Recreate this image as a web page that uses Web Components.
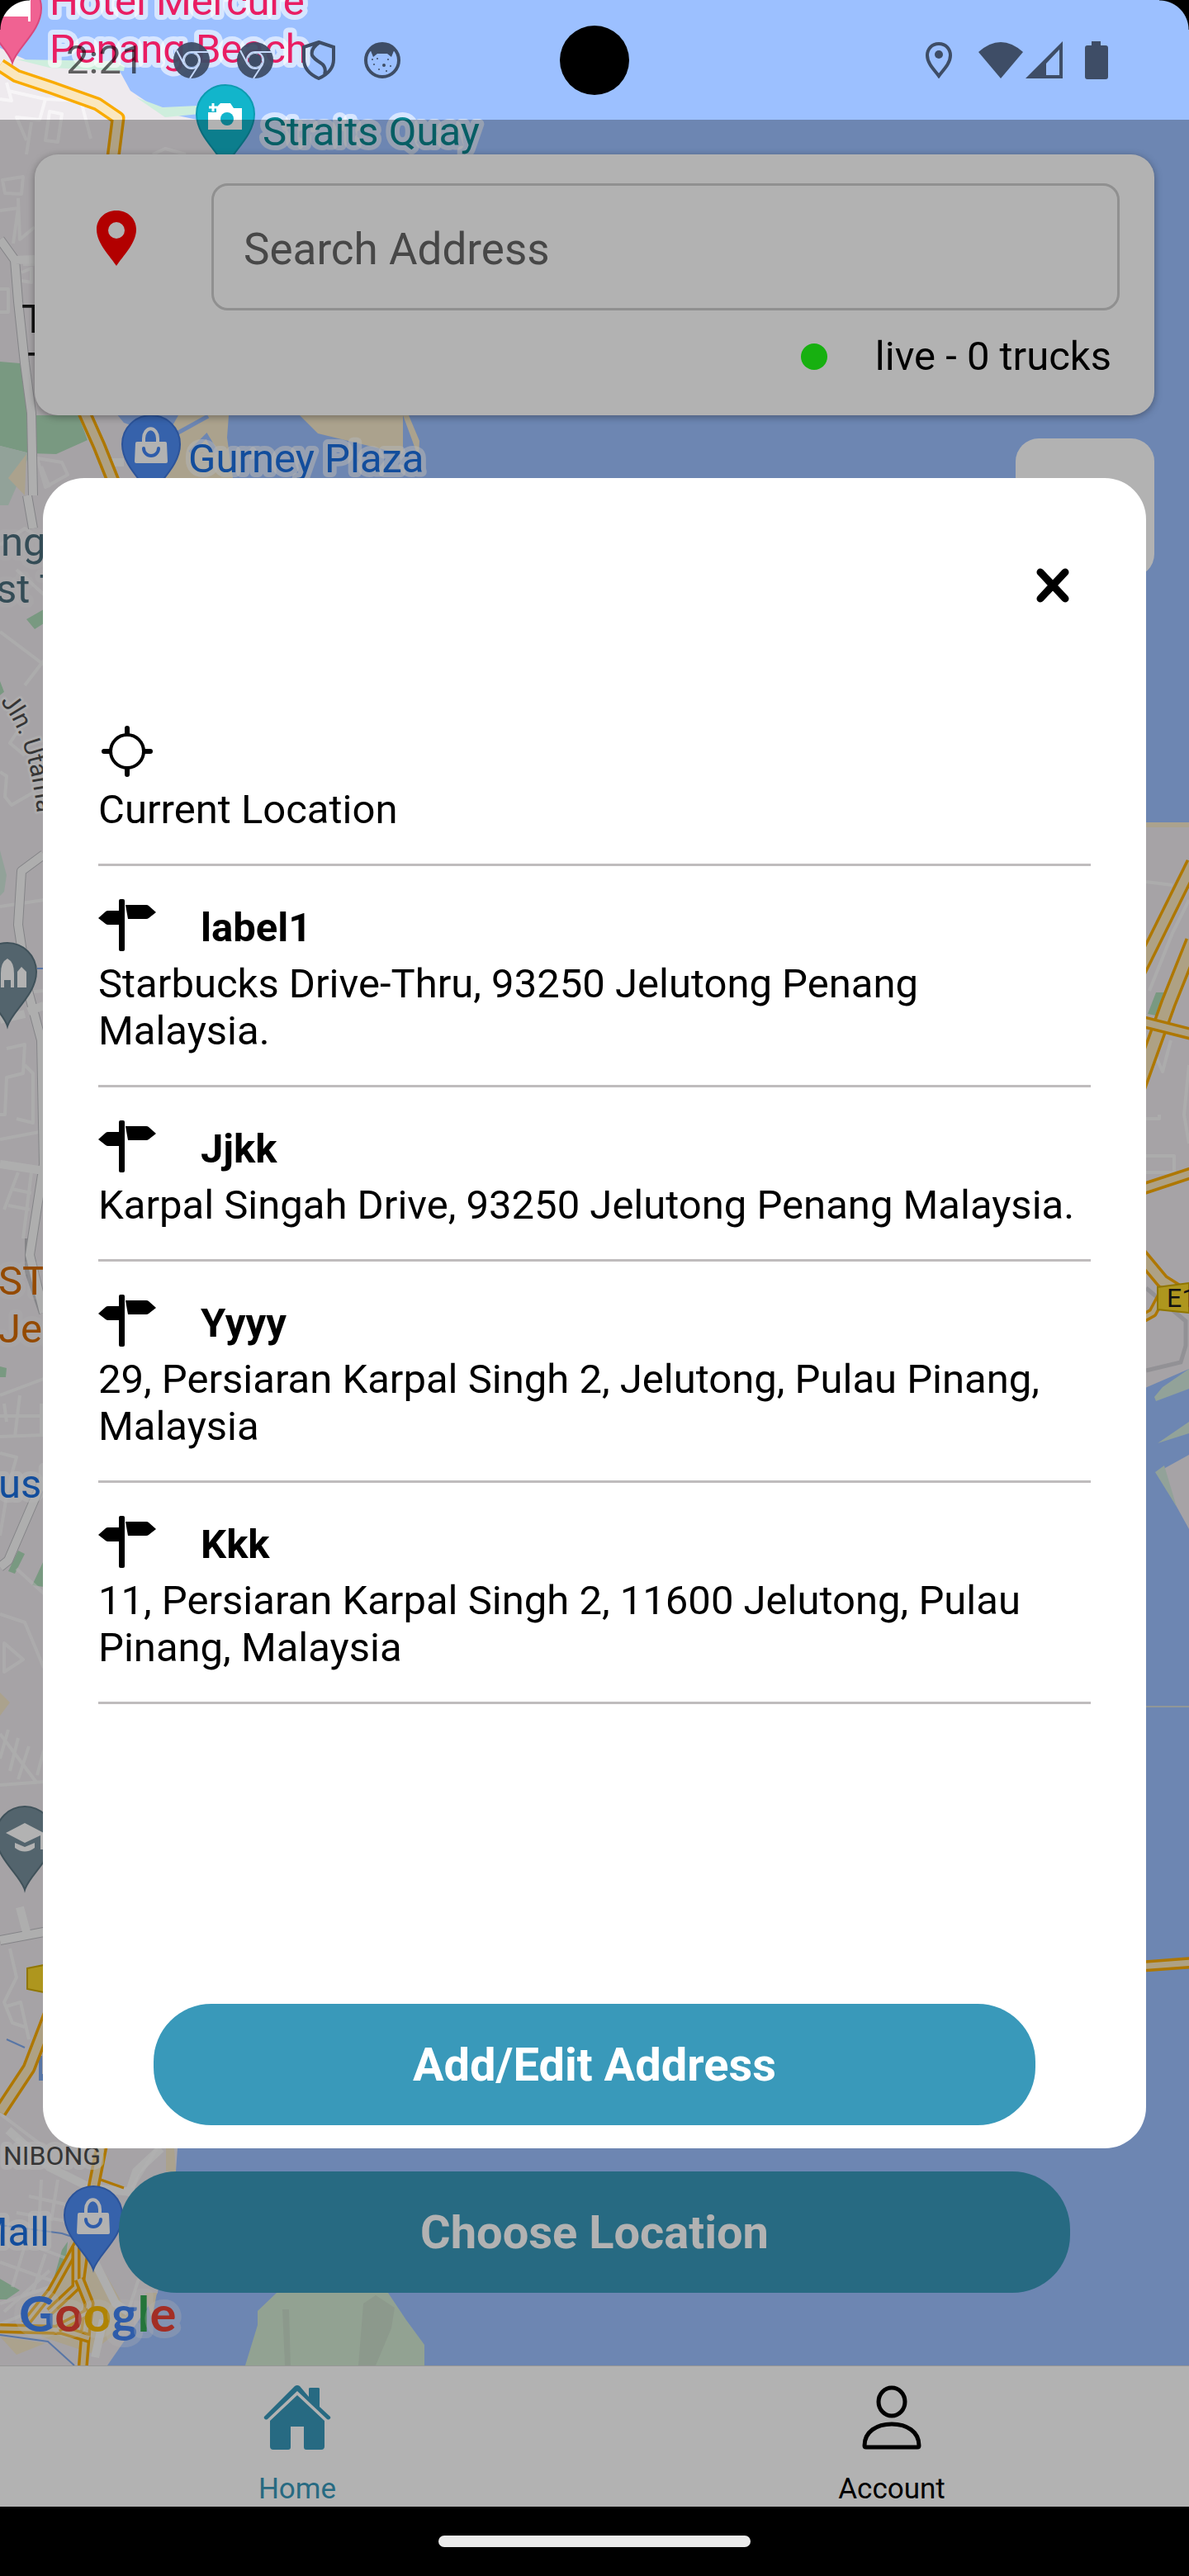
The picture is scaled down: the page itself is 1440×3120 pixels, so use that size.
<!DOCTYPE html>
<html lang="en">
<head>
<meta charset="utf-8">
<meta name="viewport" content="width=device-width, initial-scale=1">
<title>Choose Location</title>
<style>
  html, body { margin: 0; height: 100%; background: #000; }
  body { font-family: Roboto, "Noto Sans", sans-serif; }
</style>
</head>
<body>
<truck-app></truck-app>

<script>
// teardrop marker with its head centred on 0,0
const PIN = 'M0,66 C-5,48 -35,28 -35,0 A35,35 0 1 1 35,0 C35,28 5,48 0,66 Z';

const BAG = `
  <path d="M-17,-3 H17 Q19,-3 19,-1 L20,21 Q20,23 18,23 H-18 Q-20,23 -20,21 L-19,-1 Q-19,-3 -17,-3 Z" fill="#fff"/>
  <path d="M-9,-2 V-7 A8,11 0 0 1 8,-7 V-2" fill="none" stroke="#fff" stroke-width="4"/>
  <path d="M-9,5 A9,9 0 0 0 9,5" fill="none" stroke="#4285f4" stroke-width="4" stroke-linecap="round"/>`;

class StreetMap extends HTMLElement {
  constructor() {
    super();
    this.attachShadow({ mode: 'open' });
    this.render();
  }

  road(points, width = 17) {
    return `
      <polyline points="${points}" stroke="#f9ab00" stroke-width="${width}"/>
      <polyline points="${points}" stroke="#fae7be" stroke-width="${width - 7}"/>`;
  }

  pin(x, y, fill, edge, glyph) {
    return `<g transform="translate(${x} ${y})">
      <path d="${PIN}" fill="${fill}" stroke="${edge}" stroke-width="2"/>${glyph}</g>`;
  }

  render() {
    this.shadowRoot.innerHTML = `
    <style>
      :host { display: block; background: #9cc0ff; overflow: hidden; }
      svg { display: block; width: 100%; height: 100%; font-family: Roboto, "Noto Sans", sans-serif; }
      .lanes { fill: none; stroke: #fff; stroke-width: 4; stroke-linejoin: round; opacity: .55; }
      .streets { fill: none; stroke: #fafafa; stroke-width: 10; stroke-linejoin: round; }
      .edge { fill: none; stroke: #bdbdc2; stroke-width: 12; stroke-linejoin: round; }
      .roads { fill: none; stroke-linejoin: round; }
      text { font-size: 49px; stroke: #fff; stroke-opacity: .6; stroke-width: 12px; stroke-linejoin: round; paint-order: stroke; }
      .pink { fill: #e91e63; }
      .teal { fill: #0a8790; }
      .blue { fill: #1a6fe0; }
      .slate { fill: #4b6e7c; stroke-opacity: .2; }
      .orange { fill: #d56a00; stroke-opacity: .2; }
      .dark { fill: #1b1b1b; stroke: none; }
      .area { font-size: 32px; fill: #4c4c4c; }
      .street { font-size: 30px; fill: #4c4c4c; stroke-width: 6px; }
      .logo { font-family: Lato, Roboto, sans-serif; font-size: 60px; font-weight: 700; stroke-width: 16px; stroke-opacity: .3; }
    </style>
    <svg viewBox="0 0 1440 2865" preserveAspectRatio="xMinYMin slice" role="img" aria-label="Map of Penang">
      <path fill="#eeeaee" d="M0,58 L35,74 L140,77 L158,110 L197,136 L262,150 L262,400 L140,500 L150,512 L200,530 L215,2602 L213,2630 L191,2777 L130,2865 H0 Z"/>
      <path fill="#ceeedd" d="M20,72 L140,74 L151,80 L150,86 L60,82 Z M165,118 L197,130 L240,128 L242,138 L200,142 Z"/>
      <g fill="#aedbb9">
        <path d="M0,438 L24,440 L40,480 L42,503 L95,503 L106,533 L68,550 L36,549 L0,540 Z"/>
        <path d="M32,750 L53,738 L53,755 L42,762 Z M0,825 L5,838 L0,842 Z"/>
        <path d="M0,1655 L8,1657 L7,1668 L0,1668 Z M10,1903 L22,1878 L30,1882 L18,1906 Z M39,1920 L53,1890 V1922 Z"/>
        <path d="M0,2760 L24,2774 L8,2785 L0,2785 Z M75,2725 L82,2715 L78,2755 L65,2760 Z"/>
      </g>
      <path fill="#d2e8dc" d="M0,540 L36,549 L24,580 L10,612 L0,612 Z M0,1030 L8,1060 L5,1080 L0,1085 Z"/>
      <g fill="#f5e8ca">
        <path d="M195,540 L216,503 H277 L275,530 L282,579 H190 Z M363,503 H488 V550 L430,536 L385,525 Z M488,503 L495,503 L508,534 L507,555 L498,530 Z"/>
        <path d="M32,550 L10,579 L30,600 Z M0,2050 L12,2062 L0,2078 Z M201,2602 H211 L213,2630 H201 Z M190,2777 L184,2810 L176,2777 Z M0,2830 L55,2838 L20,2852 Z"/>
        <path d="M88,2705 L108,2720 L160,2810 L110,2850 L50,2830 Z"/>
      </g>
      <path fill="none" stroke="#9cc0ff" stroke-width="5" d="M205,530 L252,504 M230,548 L250,528 L262,548"/>

      <g class="lanes">
        <path d="M0,120 L14,122 L8,100 M10,110 L55,120 L48,145 L20,142 L32,170 M55,120 L98,122 L110,168 M60,135 L75,138 L70,172 L55,170 Z M32,187 L38,148 M185,187 L200,180 L225,187"/>
        <path d="M3,218 L28,214 L26,235 L6,234 Z M0,255 L22,252 L16,295 M22,240 L24,290 L42,275 M28,320 H42 M0,350 H10 V378 H0 M26,330 L38,325 V342 L26,340"/>
        <path d="M45,555 L75,560 L82,575 L55,590 Z M50,565 L60,590"/>
        <path d="M0,660 L30,640 L53,655 M20,690 L53,720 M0,765 L53,805 M30,830 L53,800 M10,850 L25,880 L12,900 L30,915 M0,935 L8,940 L6,965 L14,975 L40,960 L53,968"/>
        <path d="M0,1098 L53,1090 M0,1205 L53,1200 M8,1270 L30,1265 L28,1300 L8,1305 L6,1350 H0 M30,1290 L40,1300 V1360 L20,1355 M0,1380 L53,1370 M22,1420 L5,1465 M14,1440 L38,1445 M10,1460 L36,1465 M38,1420 L28,1500"/>
        <path d="M0,1690 L53,1670 M0,1715 H53 M5,1700 L8,1722 M24,1690 L18,1740 M0,1740 L53,1738 M0,1760 L20,1765 L10,1800 M50,1700 V1740 M0,1860 L10,1800"/>
        <path d="M20,1900 L53,1930 M0,1955 L30,1965 L53,2020 M5,1990 L28,2010 L5,2025 Z M0,2100 L45,2160 M10,2095 L0,2130 M22,2105 L12,2145 M35,2115 L22,2155 M53,2120 L45,2150 M0,2162 L53,2158"/>
        <path d="M12,2360 L20,2395 L5,2425 L15,2450 L30,2455 M8,2430 L25,2425 L35,2470 M0,2560 L53,2600"/>
        <path d="M20,2680 L80,2690 M50,2640 L48,2680 M70,2640 L62,2690 M35,2660 L80,2670 M0,2705 L80,2735 M0,2740 L70,2765 M30,2720 L15,2770 M55,2730 L40,2775 M0,2790 L60,2770 M5,2800 L60,2750 M0,2815 L50,2795"/>
      </g>
      <path class="edge" d="M0,290 L18,315 L22,365 L30,440 L38,500 L40,600 M33,600 L40,640 M53,1035 L26,1055 L22,1120 L34,1200 L50,1260 L53,1410 L36,1520 L53,1590 M53,1790 L10,1890 L0,1898 M0,2350 L53,2340 M53,1590 L36,1540 L36,1500"/>
      <path class="streets" d="M0,290 L18,315 L22,365 L30,440 L38,500 L40,600 M18,315 L42,314 M33,600 L40,640 M120,560 L150,560 M53,1035 L26,1055 L22,1120 L34,1200 L50,1260 L53,1410 L36,1520 L53,1590 M0,1410 L53,1418 M0,1235 L30,1228 M34,1225 L53,1218 M53,1790 L10,1890 L0,1898 M0,2350 L53,2340 M24,2310 L32,2340"/>
      <path class="streets" d="M10,2580 L60,2625 L110,2650 L160,2655 M195,2602 L165,2630 L155,2660 M115,2740 L140,2790 L155,2800 M125,2810 L115,2855"/>
      <path class="lanes" d="M190,2602 L160,2650 M70,2625 L20,2590 M168,2760 L155,2800" opacity=".8"/>
      <path fill="none" stroke="#7fa9ee" stroke-width="2" d="M0,2695 L75,2705 L90,2710 M0,2828 L58,2836 L90,2865 M45,1173 H53 M8,2470 L30,2480"/>
      <path d="M47,2490 H51 V2512 H53 V2520 H47 Z" fill="#7fa9ee"/>

      <g class="roads">
        ${this.road('0,79 20,92 62,106 118,126 143,143 137,190')}
        ${this.road('100,495 120,540 138,585')}
        ${this.road('0,2558 35,2505 60,2440')}
        ${this.road('124,2595 114,2645 104,2700 96,2760', 15)}
        ${this.road('104,2700 62,2775 30,2815', 11)}
        ${this.road('92,2720 92,2770 60,2800', 11)}
        ${this.road('96,2760 108,2790 104,2820 100,2870', 13)}
        ${this.road('0,2820 75,2822 108,2832', 12)}
        ${this.road('108,2800 70,2820', 11)}
      </g>
      <polyline points="122,2640 150,2650" fill="none" stroke="#f9ab00" stroke-width="3"/>
      <path d="M33,2384 L53,2380 V2413 L33,2409 Z" fill="#f9d72c" stroke="#cfa900" stroke-width="2"/>

      <!-- east shore -->
      <path fill="#eeeaee" d="M1380,998 H1440 V1658 L1380,1684 Z M1402,1783 L1440,1762 V1852 Z"/>
      <path fill="#d2e8dc" d="M1398,1692 L1408,1680 L1440,1658 V1682 L1400,1697 Z M1402,1748 L1440,1722 V1736 Z M1399,1783 L1410,1775 L1425,1825 Z"/>
      <path fill="#f5e8ca" d="M1380,996 H1440 V1002 H1380 Z"/>
      <path fill="#aedbb9" d="M1390,1228 L1400,1202 H1412 L1400,1230 Z"/>
      <g class="lanes">
        <path d="M1388,1068 L1420,1072 M1392,1200 L1420,1130 L1440,1090 M1440,1290 L1434,1350 L1440,1385 M1388,1355 H1404 V1350 M1388,1400 L1422,1400 V1420 H1388 M1400,1280 L1408,1298 L1418,1260"/>
      </g>
      <path fill="none" stroke="#d2d0d6" stroke-width="5" d="M1388,1560 L1436,1600 V1630 L1430,1650 L1388,1660"/>
      <g class="roads">
        ${this.road('1378,1180 1445,1045', 18)}
        ${this.road('1378,1318 1415,1215 1445,1140', 20)}
        ${this.road('1378,1236 1445,1253', 15)}
        ${this.road('1378,1442 1445,1420', 15)}
        ${this.road('1378,1516 1408,1552 1440,1572', 18)}
        ${this.road('1378,1600 1396,1590 1412,1560', 12)}
        ${this.road('1378,2382 1445,2377', 14)}
      </g>
      <path fill="none" stroke="#d0d8da" stroke-width="2" d="M1380,2067 H1440"/>
      <path d="M1402,1559 L1440,1554 V1590 L1402,1586 Z" fill="#f9d72c" stroke="#cfa900" stroke-width="2"/>
      <text class="dark" x="1413" y="1583" style="font-size: 32px">E1</text>

      <!-- southern islet -->
      <path fill="#d2e8d2" d="M335,2777 L312,2799 V2816 L297,2865 H514 V2840 L492,2810 L470,2777 L450,2740 H360 Z"/>
      <path fill="#c9dcc9" d="M342,2797 H350 L352,2865 H345 Z M440,2790 L455,2780 L478,2795 L474,2820 L455,2865 H434 Z"/>

      ${this.pin(15, 10, '#f06292', '#d9487c', '<path d="M-12,-10 H22 V16 H19 V10 H-12 Z" fill="#fff"/>')}
      ${this.pin(273, 138, '#12b5cb', '#0e9bb0', `
        <path d="M-6,-13 H6 L10,-7 H20 V19 H-21 V-2 H-11 V-8 Z" fill="#fff"/>
        <circle cx="2" cy="6" r="8" fill="#12b5cb"/>
        <path d="M-15,-13 V-3 M-20,-8 H-10" stroke="#fff" stroke-width="3"/>`)}
      ${this.pin(183, 538, '#4e8df5', '#3f78dc', BAG)}
      ${this.pin(113, 2683, '#4e8df5', '#3f78dc', BAG)}
      ${this.pin(9, 1177, '#78909c', '#5b7581', `
        <path d="M-8,19 V2 Q-8,-12 0,-16 Q8,-12 8,2 V19 H4 V10 H-4 V19 Z M12,19 V0 L17,-6 L23,0 V19 Z" fill="#fff"/>`)}
      ${this.pin(30, 2223, '#78909c', '#5b7581', `
        <path d="M-23,-3 L0,-15 L23,-3 V17 H19 V0 L0,9 Z M-12,9 L0,14 L12,9 V15 Q0,24 -12,15 Z" fill="#fff"/>`)}

      <text class="pink" x="60" y="18">Hotel Mercure</text>
      <text class="pink" x="60" y="76">Penang Beach</text>
      <text class="teal" x="318" y="176">Straits Quay</text>
      <text class="blue" x="228" y="572">Gurney Plaza</text>
      <text class="dark" x="26" y="403">T</text>
      <text class="dark" x="33" y="461">T</text>
      <text class="slate" x="1" y="673">ng</text>
      <text class="slate" x="-5" y="730">st T</text>
      <path id="utama" d="M0,850 Q32,885 44,975 L46,1000" fill="none"/>
      <text class="street"><textPath href="#utama">Jln. Utama</textPath></text>
      <text class="orange" x="-2" y="1568">ST</text>
      <text class="orange" x="-2" y="1626">Jel</text>
      <text class="blue" x="-2" y="1814">us'</text>
      <text class="area" x="4" y="2622">NIBONG</text>
      <text class="blue" x="60" y="2720" text-anchor="end">Mall</text>
      <text class="logo" x="23" y="2824"><tspan fill="#4285f4">G</tspan><tspan fill="#ea4335">o</tspan><tspan fill="#fbbc04">o</tspan><tspan fill="#4285f4">g</tspan><tspan fill="#34a853">l</tspan><tspan fill="#ea4335">e</tspan></text>
    </svg>`;
  }
}

class StatusBar extends HTMLElement {
  constructor() {
    super();
    this.attachShadow({ mode: 'open' });
    this.render();
  }

  render() {
    const chrome = `
      <svg width="44" height="44" viewBox="0 0 44 44">
        <path fill-rule="evenodd" d="M22,0 A22,22 0 1 1 22,44 A22,22 0 1 1 22,0 Z M22,13 A9,9 0 1 0 22,31 A9,9 0 1 0 22,13 Z" opacity=".95"/>
        <g stroke="#c4d8fa" stroke-width="2" fill="none"><circle cx="22" cy="22" r="10"/><path d="M22,12 H42 M13,27 L4,10 M31,27 L20,44"/></g>
        <circle cx="22" cy="22" r="8"/>
      </svg>`;

    this.shadowRoot.innerHTML = `
    <style>
      :host {
        display: grid;
        grid-template-columns: 1fr auto 1fr;
        align-items: center;
        height: 145px;
        padding: 0 80px;
        box-sizing: border-box;
        color: rgba(0,0,0,.6);
        position: relative;
      }
      .left, .right { display: flex; align-items: center; }
      .left { gap: 33px; }
      .time { font-size: 49px; line-height: 57px; width: 97px; }
      .right { justify-content: flex-end; padding-right: 18px; }
      .wifi { margin-left: 29px; }
      .signal { margin-left: 3px; }
      .battery { margin-left: 26px; }
      .camera { width: 84px; height: 84px; border-radius: 50%; background: #000; }
      svg { display: block; fill: #3e4d66; }
      .corner { position: absolute; top: 0; width: 36px; height: 36px; }
      .corner.l { left: 0; background: radial-gradient(circle at 100% 100%, transparent 35px, #000 36px); }
      .corner.r { right: 0; background: radial-gradient(circle at 0 100%, transparent 35px, #000 36px); }
    </style>
    <div class="left">
      <span class="time">2:21</span>
      ${chrome}
      ${chrome}
      <svg width="44" height="48" viewBox="0 0 44 48">
        <path d="M22,2 L40,8 V23 Q40,38 22,46 Q4,38 4,23 V8 Z M22,3 Q12,10 14,18 Q16,22 24,27 Q32,32 29,41" fill="none" stroke="#3e4d66" stroke-width="4"/>
      </svg>
      <svg width="44" height="44" viewBox="0 0 44 44">
        <circle cx="22" cy="22" r="20" fill="none" stroke="#3e4d66" stroke-width="4"/>
        <path d="M7,8 Q22,-3 37,8 L33,18 L28,14 H16 L11,18 Z"/>
        <g><circle cx="16" cy="20" r="1"/><circle cx="29" cy="21" r="1"/><circle cx="12" cy="27" r="1"/><circle cx="24" cy="28" r="2"/><circle cx="32" cy="29" r="1"/><circle cx="18" cy="33" r="1"/><circle cx="27" cy="35" r="1"/><circle cx="10" cy="21" r="1"/></g>
      </svg>
    </div>
    <div class="camera"></div>
    <div class="right">
      <svg width="38" height="44" viewBox="0 0 38 44">
        <path d="M19,2 C10,2 5,9 5,16 C5,26 14,34 19,41 C24,34 33,26 33,16 C33,9 28,2 19,2 Z" fill="none" stroke="#3e4d66" stroke-width="4"/>
        <circle cx="19" cy="15" r="5"/>
      </svg>
      <svg class="wifi" width="54" height="44" viewBox="0 0 54 44"><path d="M0,12 Q27,-12 54,12 L27,44 Z"/></svg>
      <svg class="signal" width="46" height="46" viewBox="0 0 46 46"><path fill-rule="evenodd" d="M45,0 V45 H0 Z M41,10 V41 H25 V27 Z"/></svg>
      <svg class="battery" width="28" height="46" viewBox="0 0 28 46"><path d="M8,0 H19 V5 H25 Q28,5 28,8 V43 Q28,46 25,46 H3 Q0,46 0,43 V8 Q0,5 3,5 H8 Z"/></svg>
    </div>
    <div class="corner l"></div>
    <div class="corner r"></div>`;
  }
}

class SearchCard extends HTMLElement {
  constructor() {
    super();
    this.attachShadow({ mode: 'open' });
    this.render();
  }

  render() {
    this.shadowRoot.innerHTML = `
    <style>
      :host {
        display: block;
        margin: 42px 42px 0;
        padding: 35px 42px 43px 56px;
        background: #fff;
        border-radius: 28px;
        box-shadow: 0 2px 10px rgba(0,0,0,.35);
      }
      .row { display: flex; align-items: center; }
      label { padding: 0 72px 20px 0; }
      svg { display: block; fill: #f00; }
      input {
        flex: 1;
        min-width: 0;
        height: 154px;
        padding: 6px 36px 0;
        box-sizing: border-box;
        border: 3px solid #cecece;
        border-radius: 20px;
        background: transparent;
        font: 53px Roboto, "Noto Sans", sans-serif;
      }
      input::placeholder { color: #666; opacity: 1; }
      .live {
        display: flex;
        justify-content: flex-end;
        align-items: center;
        gap: 58px;
        margin-top: 27px;
        padding-right: 10px;
        font-size: 49px;
        line-height: 57px;
      }
      .dot { width: 32px; height: 32px; border-radius: 50%; background: #21fd18; }
    </style>
    <div class="row">
      <label for="search">
        <svg width="86" height="68" viewBox="0 0 86 68" aria-label="Location">
          <path fill-rule="evenodd" d="M43,0 C29,0 19,10 19,23 C19,40 36,56 43,67 C50,56 67,40 67,23 C67,10 57,0 43,0 Z M43,14 A10,10 0 1 1 43,34 A10,10 0 1 1 43,14 Z"/>
        </svg>
      </label>
      <input id="search" type="text" placeholder="Search Address">
    </div>
    <div class="live"><span class="dot"></span><span><slot></slot></span></div>`;
  }
}

class PillButton extends HTMLElement {
  constructor() {
    super();
    this.attachShadow({ mode: 'open' });
    this.render();
  }

  render() {
    this.shadowRoot.innerHTML = `
    <style>
      :host { display: block; width: 80%; margin: 0 auto; }
      button {
        display: block;
        width: 100%;
        height: 147px;
        padding: 0;
        border: 0;
        border-radius: 70px;
        background: #3999ba;
        color: #fff;
        font: 700 56px/66px Roboto, "Noto Sans", sans-serif;
        cursor: pointer;
      }
    </style>
    <button type="button"><slot></slot></button>`;
  }
}

class AddressItem extends HTMLElement {
  constructor() {
    super();
    this.attachShadow({ mode: 'open' });
    this.render();
  }

  get icon() {
    if (this.hasAttribute('current')) {
      return `<svg width="70" height="70" viewBox="0 0 70 70">
        <g fill="none" stroke="#000" stroke-linecap="round">
          <circle cx="35" cy="35" r="20" stroke-width="4"/>
          <path d="M35,7 V14 M35,56 V63 M7,35 H14 M56,35 H63" stroke-width="6"/>
        </g></svg>`;
    }
    return `<svg width="70" height="70" viewBox="0 0 70 70">
      <rect x="25" y="3" width="7" height="63" rx="2"/>
      <path d="M25,17 H12 Q10,17 9,18 L0,26 L9,33 Q10,34 12,34 H25 Z M33,10 H58 Q60,10 61,11 L70,19 L61,26 Q60,27 58,27 H36 Z"/></svg>`;
  }

  render() {
    const label = this.getAttribute('label') || '';
    this.shadowRoot.innerHTML = `
    <style>
      :host { display: block; border-bottom: 3px solid #bfbcbd; }
      button {
        display: block;
        width: 100%;
        padding: 37px 0;
        border: 0;
        background: none;
        color: #000;
        font: 49px/57px Roboto, "Noto Sans", sans-serif;
        text-align: left;
        cursor: pointer;
      }
      .head { display: flex; align-items: center; gap: 54px; margin-bottom: 7px; }
      .label { font-weight: 700; padding-top: 6px; }
      .address { display: block; }
      svg { display: block; }
    </style>
    <button type="button">
      <span class="head">${this.icon}${label ? `<span class="label">${label}</span>` : ''}</span>
      <span class="address"><slot></slot></span>
    </button>`;
  }
}

class AddressDialog extends HTMLElement {
  constructor() {
    super();
    this.attachShadow({ mode: 'open' });
    this.render();
  }

  connectedCallback() {
    this.shadowRoot.querySelector('.close')
      .addEventListener('click', () => this.dispatchEvent(new Event('close')));
  }

  render() {
    this.shadowRoot.innerHTML = `
    <style>
      :host {
        display: flex;
        flex-direction: column;
        flex: 1;
        min-height: 70%;
        margin: 0 52px;
        box-sizing: border-box;
        padding-bottom: 28px;
        border-radius: 50px;
        background: #fff;
      }
      .close {
        align-self: flex-end;
        margin: 92px 74px 0 0;
        padding: 16px 18px;
        border: 0;
        background: none;
        cursor: pointer;
      }
      .close svg { display: block; }
      .list { margin: 91px 67px 0; flex: 1; }
    </style>
    <button class="close" type="button" aria-label="Close">
      <svg width="42" height="44" viewBox="0 0 42 44"><path d="M6,6 L36,38 M36,6 L6,38" stroke="#000" stroke-width="9" stroke-linecap="round"/></svg>
    </button>
    <div class="list"><slot></slot></div>
    <pill-button>Add/Edit Address</pill-button>`;
  }
}

class TabBar extends HTMLElement {
  constructor() {
    super();
    this.attachShadow({ mode: 'open' });
    this.render();
  }

  render() {
    this.shadowRoot.innerHTML = `
    <style>
      :host { display: block; background: #fff; border-top: 1px solid #d8d8d8; position: relative; }
      nav { display: grid; grid-template-columns: 1fr 1fr; height: 170px; }
      a {
        display: flex;
        flex-direction: column;
        align-items: center;
        justify-content: space-between;
        padding-top: 23px;
        color: #000;
        font-size: 35px;
        line-height: 42px;
        text-decoration: none;
      }
      a.active { color: #3999ba; }
      svg { display: block; }
    </style>
    <nav>
      <a class="active" href="#home">
        <svg width="82" height="78" viewBox="0 0 82 78" fill="currentColor">
          <path d="M55,14 V4 Q55,3 57,3 H66 Q68,3 68,4 V26 L81,38 Q82,40 80,41 Q79,42 77,41 L41,7 L5,41 Q3,42 2,41 Q0,40 1,38 L38,1 Q41,-1 44,1 Z"/>
          <path d="M41,12 L74,43 V74 Q74,78 70,78 H52 Q49,78 49,75 V50 H33 V75 Q33,78 30,78 H12 Q8,78 8,74 V43 Z"/>
        </svg>
        Home
      </a>
      <a href="#account">
        <svg width="72" height="78" viewBox="0 0 72 78" fill="none" stroke="currentColor" stroke-width="5" stroke-linejoin="round">
          <ellipse cx="36" cy="20" rx="16" ry="17"/>
          <path d="M3,73 C3,56 18,47 36,47 C54,47 69,56 69,73 Q69,75 67,75 H5 Q3,75 3,73 Z"/>
        </svg>
        Account
      </a>
    </nav>`;
  }
}

class TruckApp extends HTMLElement {
  constructor() {
    super();
    this.attachShadow({ mode: 'open' });
    this.render();
  }

  connectedCallback() {
    const scrim = this.shadowRoot.querySelector('.scrim');
    this.shadowRoot.querySelector('address-dialog')
      .addEventListener('close', () => { scrim.hidden = true; });
    this.shadowRoot.querySelector('.choose')
      .addEventListener('click', () => { scrim.hidden = false; });
  }

  render() {
    this.shadowRoot.innerHTML = `
    <style>
      :host { display: flex; flex-direction: column; min-height: 100vh; background: #000; }
      main { flex: 1; display: flex; flex-direction: column; position: relative; }
      .stage { flex: 1; display: flex; flex-direction: column; position: relative; }
      street-map { position: absolute; inset: 0; }
      search-card, .choose, .locate { position: relative; }
      .locate {
        align-self: flex-end;
        width: 168px;
        height: 168px;
        margin: 28px 42px 0;
        border: 0;
        border-radius: 28px;
        background: #fff;
      }
      .choose { margin: auto auto 88px; }
      .scrim {
        position: absolute;
        inset: 145px 0 0;
        display: flex;
        align-items: center;
        background: rgba(0,0,0,.3);
      }
      .scrim[hidden] { display: none; }
      .gesture { display: flex; justify-content: center; align-items: center; height: 84px; }
      .gesture span { width: 378px; height: 14px; border-radius: 7px; background: #ebebeb; }
    </style>
    <main>
      <div class="stage">
        <street-map></street-map>
        <status-bar></status-bar>
        <search-card>live - 0 trucks</search-card>
        <button class="locate" type="button" aria-label="My location"></button>
        <pill-button class="choose">Choose Location</pill-button>
      </div>
      <tab-bar></tab-bar>
      <div class="scrim">
        <address-dialog role="dialog" aria-label="Saved addresses">
          <address-item current>Current Location</address-item>
          <address-item label="label1">Starbucks Drive-Thru, 93250 Jelutong Penang Malaysia.</address-item>
          <address-item label="Jjkk">Karpal Singah Drive, 93250 Jelutong Penang Malaysia.</address-item>
          <address-item label="Yyyy">29, Persiaran Karpal Singh 2, Jelutong, Pulau Pinang, Malaysia</address-item>
          <address-item label="Kkk">11, Persiaran Karpal Singh 2, 11600 Jelutong, Pulau Pinang, Malaysia</address-item>
        </address-dialog>
      </div>
    </main>
    <div class="gesture"><span></span></div>`;
  }
}

customElements.define('street-map', StreetMap);
customElements.define('status-bar', StatusBar);
customElements.define('search-card', SearchCard);
customElements.define('pill-button', PillButton);
customElements.define('address-item', AddressItem);
customElements.define('address-dialog', AddressDialog);
customElements.define('tab-bar', TabBar);
customElements.define('truck-app', TruckApp);
</script>
</body>
</html>
